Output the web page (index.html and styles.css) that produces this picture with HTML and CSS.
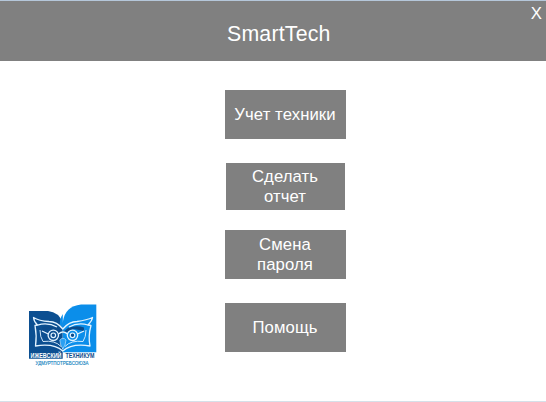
FILE: index.html
```html
<!DOCTYPE html>
<html lang="ru">
<head>
<meta charset="utf-8">
<title>SmartTech</title>
<link rel="stylesheet" href="styles.css">
</head>
<body>
<div class="window">
  <header class="header">
    <h1 class="title">SmartTech</h1>
    <button class="close">X</button>
  </header>
  <main class="content">
    <div class="side">
      <svg class="logo" viewBox="20 295 90 80" width="90" height="80">
        <path fill="#0c4f91" d="M29 311H48Q59 312 62.700 323V358.800H29Z"/>
        <path fill="#0b8eea" d="M96.300 304.400H81Q65 306 62.800 322V352.300H96.300Z"/>
        <path fill="#0b8eea" d="M62.800 314Q59 320 60 325L62.800 328Z"/>
        <path fill="#0c4b8b" d="M42 327.500Q52 325 58 328L62.800 332L68 328Q76 325 84 327.500V331L74 329L65 333H60L50 329L42 331Z"/>
        <g fill="none" stroke="#e3f3ff" stroke-width="1.3" stroke-linejoin="round">
          <path d="M62.800 329Q57 321.500 49 321.500Q39 321 33.500 317.500Q34 322 37.500 325L35 325.500Q37 336 35.500 346Q54 343 62.800 351Q72 343 90 346Q88 336 91 325.500L88 325Q92 321 92.500 317.500Q87 320 77 321.500Q69 321.500 62.800 329Z"/>
          <path d="M37.500 325Q48 322 57 327M88 325Q78 322 69 327"/>
          <path stroke-width=".9" d="M40 330Q40 337 43 341.500Q55 340 61 346.500M86 330Q86 337 83 341.500Q71 340 65 346.500"/>
          <circle cx="53.300" cy="335.300" r="5.200"/><circle cx="72.500" cy="335.300" r="5.200"/>
          <path d="M58.500 334Q63 330 67.500 334M42 331L48.300 334M84 331L77.500 334"/>
        </g>
        <g fill="#0c4b8b" stroke="#e3f3ff" stroke-width="1.2">
          <circle cx="53.300" cy="335.300" r="2.300"/><circle cx="72.500" cy="335.300" r="2.300"/>
        </g>
        <path fill="#2ba0f2" stroke="#d9efff" stroke-width=".6" d="M59.800 340Q63 336.500 66 340L65 345L62.800 349L60.700 345Z"/>
        <text class="logo-name logo-name-left" x="30.500" y="358" textLength="31" lengthAdjust="spacingAndGlyphs">ИЖЕВСКИЙ</text>
        <text class="logo-name logo-name-right" x="65.500" y="358" textLength="29" lengthAdjust="spacingAndGlyphs">ТЕХНИКУМ</text>
        <text class="logo-sub" x="35.500" y="365" textLength="53" lengthAdjust="spacingAndGlyphs">УДМУРТПОТРЕБСОЮЗА</text>
      </svg>
    </div>
    <nav class="menu">
      <button class="item">Учет техники</button>
      <button class="item item-inset">Сделать<br>отчет</button>
      <button class="item">Смена<br>пароля</button>
      <button class="item item-last">Помощь</button>
    </nav>
  </main>
</div>
</body>
</html>
```

FILE: styles.css
```css
* { box-sizing: border-box; }
body { margin: 0; font-family: "Liberation Sans", Arial, sans-serif; background: #fff; }
.window {
  display: flex;
  flex-direction: column;
  width: 546px;
  height: 402px;
  border-top: 1px solid #b5c7da;
  border-bottom: 1px solid #d6e0e9;
}
.header {
  display: flex;
  justify-content: space-between;
  height: 60px;
  padding: 0 4px 0 227px;
  background: #808080;
  color: #fff;
}
.title {
  margin: 0;
  padding-top: 21px;
  font-size: 21.3px;
  font-weight: 400;
  line-height: 24px;
  letter-spacing: 0.2px;
}
.close, .item {
  padding: 0;
  border: 0;
  background: #808080;
  color: #fff;
  font: 16.7px/20px "Liberation Sans", Arial, sans-serif;
}
.close { align-self: flex-start; margin-top: 3px; }
.content { display: grid; grid-template-columns: 225px 121px; flex: 1; }
.side { display: flex; align-items: flex-end; padding: 0 0 26px 20px; }
.logo { display: block; }
.menu { display: flex; flex-direction: column; padding-top: 29px; }
.item { width: 121px; height: 49px; margin-bottom: 24px; padding-right: 1px; letter-spacing: 0.1px; }
.item-inset { width: 119px; height: 47px; margin: 0 1px 20px; }
.item-last { margin-bottom: 0; }
.logo-name { font-size: 6.3px; font-weight: 700; }
.logo-name-left { fill: #fff; }
.logo-name-right { fill: #0c4b8b; }
.logo-sub { font-size: 5.4px; fill: #1586c2; stroke: #1586c2; stroke-width: 0.15px; }
```
